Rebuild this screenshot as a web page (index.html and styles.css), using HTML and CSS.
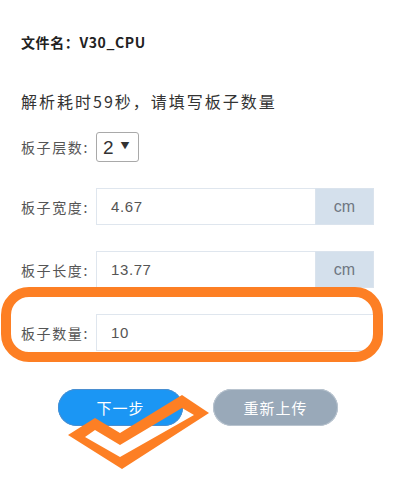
FILE: index.html
```html
<!DOCTYPE html>
<html lang="zh">
<head>
<meta charset="utf-8">
<title>板子数量</title>
<link rel="stylesheet" href="styles.css">
</head>
<body>
<div class="page">
  <div class="title">文件名：V30_CPU</div>
  <div class="notice">解析耗时59秒，请填写板子数量</div>

  <div class="row row-select">
    <span class="label">板子层数:</span>
    <div class="select"><span class="sel-val">2</span><span class="caret">▼</span></div>
  </div>

  <div class="row">
    <span class="label">板子宽度:</span>
    <div class="group">
      <div class="input">4.67</div>
      <div class="addon">cm</div>
    </div>
  </div>

  <div class="row">
    <span class="label">板子长度:</span>
    <div class="group">
      <div class="input">13.77</div>
      <div class="addon">cm</div>
    </div>
  </div>

  <div class="row">
    <span class="label">板子数量:</span>
    <div class="group">
      <div class="input full">10</div>
    </div>
  </div>

  <div class="actions">
    <button class="btn btn-primary">下一步</button>
    <button class="btn btn-grey">重新上传</button>
  </div>
</div>

<svg class="annot" width="404" height="480" viewBox="0 0 404 480">
  <rect x="6" y="292" width="372" height="65" rx="23" ry="23" fill="none" stroke="#fd7f24" stroke-width="10"/>
  <path fill="#fd7f24" fill-rule="evenodd" d="M68 435 L95 418 L120 433 L182 395 L209 413 L122 469 Z M85 437 L120 457 L194 415 L182 408 L120 445 L95 430 Z"/>
</svg>
</body>
</html>
```

FILE: styles.css
```css
html, body {
  margin: 0;
  padding: 0;
  background: #ffffff;
}

body {
  font-family: "Noto Sans CJK SC", "Noto Sans", sans-serif;
  color: #333333;
  width: 404px;
  height: 480px;
  position: relative;
  overflow: hidden;
}

.page {
  padding: 32px 0 0 21px;
}

.title {
  font-size: 14px;
  font-weight: bold;
  line-height: 20px;
  height: 20px;
  letter-spacing: 0.6px;
  color: #222;
}

.notice {
  margin-top: 38px;
  font-size: 16px;
  line-height: 22px;
  height: 22px;
  letter-spacing: 2px;
  color: #333;
}

.row {
  display: flex;
  align-items: center;
  margin-top: 26px;
  height: 37px;
}

.row-select {
  margin-top: 20px;
  height: 30px;
}

.label {
  width: 75px;
  flex: none;
  font-size: 14px;
  letter-spacing: 1.6px;
  color: #555;
  line-height: 20px;
}

.select {
  box-sizing: border-box;
  width: 43px;
  height: 30px;
  border: 1px solid #a9a9a9;
  border-radius: 3px;
  display: flex;
  align-items: center;
  padding-left: 6px;
  gap: 7px;
}

.sel-val {
  font-family: "Liberation Sans", sans-serif;
  font-size: 19px;
  color: #333;
  line-height: 1;
}

.caret {
  font-size: 9px;
  color: #333;
  line-height: 1;
  margin-top: -3px;
}

.group {
  display: flex;
  height: 37px;
}

.input {
  box-sizing: border-box;
  width: 219px;
  height: 37px;
  border: 1px solid #dfe6ee;
  border-right: none;
  padding-left: 14px;
  display: flex;
  align-items: center;
  font-family: "Liberation Sans", sans-serif;
  font-size: 15px;
  letter-spacing: 0.6px;
  color: #555;
}

.input.full {
  width: 279px;
  border-right: 1px solid #dfe6ee;
}

.addon {
  box-sizing: border-box;
  width: 59px;
  height: 37px;
  background: #d4e0ec;
  border: 1px solid #dae3ed;
  display: flex;
  align-items: center;
  justify-content: center;
  font-family: "Liberation Sans", sans-serif;
  font-size: 16px;
  color: #6f7782;
}

.actions {
  display: flex;
  gap: 30px;
  margin-top: 38px;
  padding-left: 37px;
}

.btn {
  width: 125px;
  height: 37px;
  border-radius: 19px;
  border: none;
  color: #ffffff;
  font-family: "Noto Sans CJK SC", sans-serif;
  font-size: 15px;
  letter-spacing: 1px;
  padding: 0;
}

.btn-primary {
  background: #1b96f4;
  box-shadow: inset 0 0 0 1px #4a8ed0;
}

.btn-grey {
  background: #99a9b9;
  box-shadow: inset 0 0 0 1px #b9c4cf;
}

.annot {
  position: absolute;
  left: 0;
  top: 0;
  pointer-events: none;
}
```
